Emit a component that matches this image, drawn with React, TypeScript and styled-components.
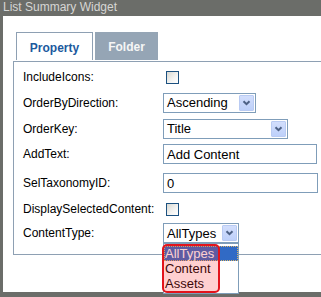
import React from "react";
import styled, { createGlobalStyle } from "styled-components";

const GlobalStyle = createGlobalStyle`
  body {
    margin: 0;
    background: #ffffff;
    font-family: "Liberation Sans", Arial, sans-serif;
  }
`;

const Frame = styled.div`
  width: 321px;
  height: 297px;
  background: #6b6d69;
  overflow: hidden;
  position: relative;
`;

const TitleBar = styled.div`
  height: 16px;
  line-height: 15px;
  padding-left: 3px;
  font-size: 12px;
  color: #d6d6d4;
  white-space: nowrap;
`;

const Panel = styled.div`
  margin-left: 3px;
  width: 340px;
  height: 276px;
  box-sizing: border-box;
  background: #ffffff;
  padding: 16px 0 0 10px;
`;

const TabRow = styled.div`
  display: flex;
  align-items: flex-start;
  gap: 2px;
  margin-left: 3px;
  height: 29px;
`;

const Tab = styled.div<{ active?: boolean }>`
  box-sizing: border-box;
  width: ${({ active }) => (active ? "77px" : "63px")};
  height: 28px;
  display: flex;
  align-items: center;
  justify-content: center;
  padding-top: 2px;
  font-size: 12px;
  font-weight: bold;
  color: ${({ active }) => (active ? "#1c5a9e" : "#f6f6f6")};
  background: ${({ active }) => (active ? "#ffffff" : "#95a5b5")};
  border: ${({ active }) => (active ? "1px solid #8ea0b3" : "none")};
  border-bottom: none;
`;

const Box = styled.div`
  box-sizing: border-box;
  width: 330px;
  height: 194px;
  border: 1px solid #8ea0b3;
  padding: 2px 0 0 9px;
`;

const Row = styled.div<{ h: number }>`
  display: flex;
  align-items: center;
  height: ${({ h }) => h}px;
`;

const Label = styled.div`
  width: 140px;
  font-size: 12px;
  color: #000000;
  white-space: nowrap;
`;

const Checkbox = styled.div`
  box-sizing: border-box;
  width: 13px;
  height: 13px;
  margin-left: 3px;
  border: 1px solid #1c5180;
  background: linear-gradient(135deg, #d8d8d2 0%, #f4f4f2 60%, #ffffff 100%);
`;

const SelectBox = styled.div<{ w: number }>`
  position: relative;
  box-sizing: border-box;
  width: ${({ w }) => w}px;
  height: 20px;
  border: 1px solid #7f9db9;
  background: #ffffff;
  display: flex;
  align-items: center;
  justify-content: space-between;
  padding: 0 1px 0 3px;
  font-size: 13px;
  color: #000000;
`;

const ArrowButton = styled.div`
  box-sizing: border-box;
  width: 15px;
  height: 16px;
  border: 1px solid #b9cbf3;
  border-radius: 1px;
  background: linear-gradient(180deg, #d2defc 0%, #bdd0fa 100%);
  display: flex;
  align-items: center;
  justify-content: center;
`;

const TextInput = styled.div<{ w: number }>`
  box-sizing: border-box;
  width: ${({ w }) => w}px;
  height: 20px;
  border: 1px solid #7f9db9;
  padding: 0 3px;
  display: flex;
  align-items: center;
  font-size: 13px;
  color: #000000;
`;

const DropList = styled.div`
  position: absolute;
  left: -1px;
  top: 19px;
  width: 76px;
  box-sizing: border-box;
  border: 1px solid #7f9db9;
  background: #ffffff;
  padding: 2px 0;
  z-index: 5;
`;

const Option = styled.div<{ selected?: boolean }>`
  box-sizing: border-box;
  height: 15px;
  line-height: 15px;
  padding-left: 1px;
  font-size: 13px;
  color: ${({ selected }) => (selected ? "#ffffff" : "#000000")};
  background: ${({ selected }) => (selected ? "#316ac5" : "transparent")};
  outline: ${({ selected }) => (selected ? "1px dotted #d9b46a" : "none")};
  outline-offset: -1px;
`;

const Highlight = styled.div`
  position: absolute;
  left: -2px;
  top: 0px;
  width: 58px;
  height: 49px;
  box-sizing: border-box;
  border: 2px solid #e3141c;
  border-radius: 5px;
  background: rgba(255, 40, 40, 0.22);
  z-index: 6;
`;

const Chevron = () => (
  <svg width="9" height="6" viewBox="0 0 9 6">
    <path d="M1.5 1.2 L4.5 4.2 L7.5 1.2" fill="none" stroke="#4d6185" strokeWidth="2" />
  </svg>
);

const Select = ({ w, value, open }: { w: number; value: string; open?: boolean }) => (
  <SelectBox w={w}>
    {value}
    <ArrowButton>
      <Chevron />
    </ArrowButton>
    {open && (
      <DropList>
        <Option selected>AllTypes</Option>
        <Option>Content</Option>
        <Option>Assets</Option>
        <Highlight />
      </DropList>
    )}
  </SelectBox>
);

export default function App() {
  return (
    <Frame>
      <GlobalStyle />
      <TitleBar>List Summary Widget</TitleBar>
      <Panel>
        <TabRow>
          <Tab active>Property</Tab>
          <Tab>Folder</Tab>
        </TabRow>
        <Box>
          <Row h={26}>
            <Label>IncludeIcons:</Label>
            <Checkbox />
          </Row>
          <Row h={25}>
            <Label>OrderByDirection:</Label>
            <Select w={93} value="Ascending" />
          </Row>
          <Row h={27}>
            <Label>OrderKey:</Label>
            <Select w={125} value="Title" />
          </Row>
          <Row h={24}>
            <Label>AddText:</Label>
            <TextInput w={154}>Add Content</TextInput>
          </Row>
          <Row h={34}>
            <Label>SelTaxonomyID:</Label>
            <TextInput w={155}>0</TextInput>
          </Row>
          <Row h={18}>
            <Label>DisplaySelectedContent:</Label>
            <Checkbox />
          </Row>
          <Row h={30}>
            <Label>ContentType:</Label>
            <Select w={76} value="AllTypes" open />
          </Row>
        </Box>
      </Panel>
    </Frame>
  );
}
